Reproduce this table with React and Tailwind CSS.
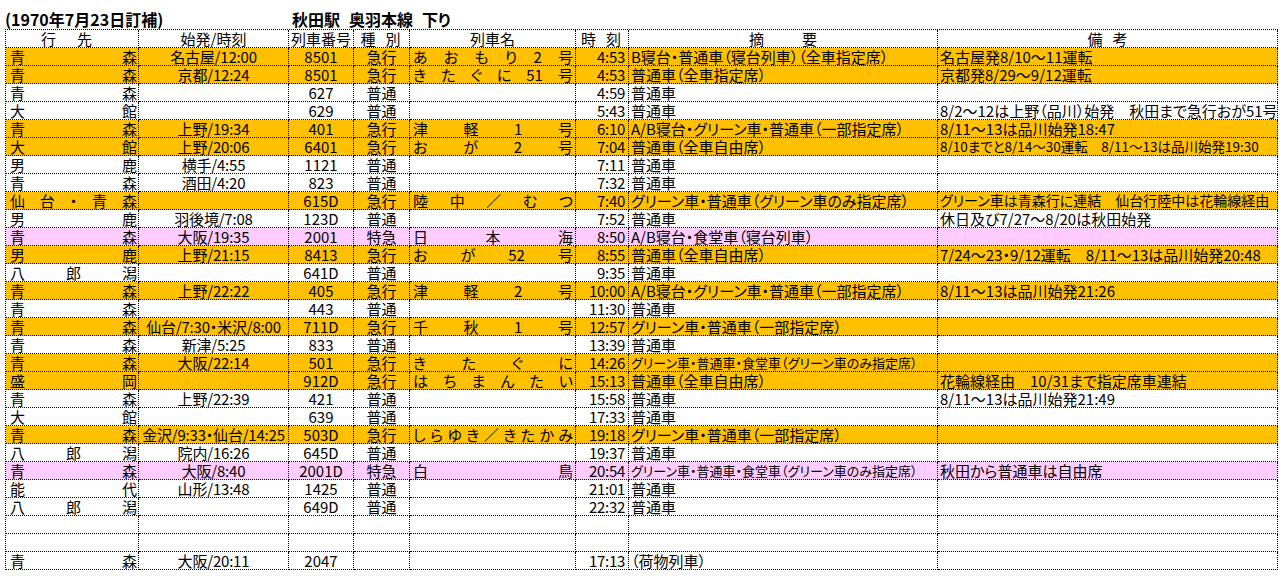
import React from "react";

const GRID = "grid grid-cols-[133px_150px_65px_56px_166px_53px_309px_340px]";
const CELL =
  "h-[18px] border-r border-b border-dotted border-black whitespace-nowrap leading-[17px]";

const O = "bg-[#ffc000]";
const P = "bg-[#ffccff]";
const W = "bg-white";

const rows = [
  [O, ["青", "森"], "名古屋/12:00", "8501", "急行", ["あ", "お", "も", "り", "2", "号"], "4:53", "B寝台・普通車（寝台列車）（全車指定席）", "名古屋発8/10〜11運転"],
  [O, ["青", "森"], "京都/12:24", "8501", "急行", ["き", "た", "ぐ", "に", "51", "号"], "4:53", "普通車（全車指定席）", "京都発8/29〜9/12運転"],
  [W, ["青", "森"], "", "627", "普通", null, "4:59", "普通車", ""],
  [W, ["大", "館"], "", "629", "普通", null, "5:43", "普通車", "8/2〜12は上野（品川）始発　秋田まで急行おが51号"],
  [O, ["青", "森"], "上野/19:34", "401", "急行", ["津", "軽", "1", "号"], "6:10", "A/B寝台・グリーン車・普通車（一部指定席）", "8/11〜13は品川始発18:47"],
  [O, ["大", "館"], "上野/20:06", "6401", "急行", ["お", "が", "2", "号"], "7:04", "普通車（全車自由席）", "8/10までと8/14〜30運転　8/11〜13は品川始発19:30", { n: "text-[13.5px]" }],
  [W, ["男", "鹿"], "横手/4:55", "1121", "普通", null, "7:11", "普通車", ""],
  [W, ["青", "森"], "酒田/4:20", "823", "普通", null, "7:32", "普通車", ""],
  [O, ["仙", "台", "・", "青", "森"], "", "615D", "急行", ["陸", "中", "／", "む", "つ"], "7:40", "グリーン車・普通車（グリーン車のみ指定席）", "グリーン車は青森行に連結　仙台行陸中は花輪線経由", { n: "text-[14px]" }],
  [W, ["男", "鹿"], "羽後境/7:08", "123D", "普通", null, "7:52", "普通車", "休日及び7/27〜8/20は秋田始発"],
  [P, ["青", "森"], "大阪/19:35", "2001", "特急", ["日", "本", "海"], "8:50", "A/B寝台・食堂車（寝台列車）", ""],
  [O, ["男", "鹿"], "上野/21:15", "8413", "急行", ["お", "が", "52", "号"], "8:55", "普通車（全車自由席）", "7/24〜23・9/12運転　8/11〜13は品川始発20:48"],
  [W, ["八", "郎", "潟"], "", "641D", "普通", null, "9:35", "普通車", ""],
  [O, ["青", "森"], "上野/22:22", "405", "急行", ["津", "軽", "2", "号"], "10:00", "A/B寝台・グリーン車・普通車（一部指定席）", "8/11〜13は品川始発21:26"],
  [W, ["青", "森"], "", "443", "普通", null, "11:30", "普通車", ""],
  [O, ["青", "森"], "仙台/7:30・米沢/8:00", "711D", "急行", ["千", "秋", "1", "号"], "12:57", "グリーン車・普通車（一部指定席）", ""],
  [W, ["青", "森"], "新津/5:25", "833", "普通", null, "13:39", "普通車", ""],
  [O, ["青", "森"], "大阪/22:14", "501", "急行", ["き", "た", "ぐ", "に"], "14:26", "グリーン車・普通車・食堂車（グリーン車のみ指定席）", "", { d: "text-[13px]" }],
  [O, ["盛", "岡"], "", "912D", "急行", ["は", "ち", "ま", "ん", "た", "い"], "15:13", "普通車（全車自由席）", "花輪線経由　10/31まで指定席車連結"],
  [W, ["青", "森"], "上野/22:39", "421", "普通", null, "15:58", "普通車", "8/11〜13は品川始発21:49"],
  [W, ["大", "館"], "", "639", "普通", null, "17:33", "普通車", ""],
  [O, ["青", "森"], "金沢/9:33・仙台/14:25", "503D", "急行", ["し", "ら", "ゆ", "き", "／", "き", "た", "か", "み"], "19:18", "グリーン車・普通車（一部指定席）", ""],
  [W, ["八", "郎", "潟"], "院内/16:26", "645D", "普通", null, "19:37", "普通車", ""],
  [P, ["青", "森"], "大阪/8:40", "2001D", "特急", ["白", "鳥"], "20:54", "グリーン車・普通車・食堂車（グリーン車のみ指定席）", "秋田から普通車は自由席", { d: "text-[13px]" }],
  [W, ["能", "代"], "山形/13:48", "1425", "普通", null, "21:01", "普通車", ""],
  [W, ["八", "郎", "潟"], "", "649D", "普通", null, "22:32", "普通車", ""],
  [W, null, "", "", "", null, "", "", ""],
  [W, null, "", "", "", null, "", "", ""],
  [W, ["青", "森"], "大阪/20:11", "2047", "", null, "17:13", "（荷物列車）", ""],
];

function Dist({ tokens, cls }) {
  if (!tokens) return null;
  return (
    <div className={`flex justify-between ${cls}`}>
      {tokens.map((t, i) => (
        <span key={i}>{t}</span>
      ))}
    </div>
  );
}

export default function App() {
  return (
    <div className="w-[1285px] h-[576px] bg-white text-black font-['Noto_Sans_CJK_JP','Noto_Sans_CJK_SC',sans-serif] text-[15px] [font-feature-settings:'palt'] overflow-hidden">
      <div className="flex h-[29px] items-end pl-[5px] pb-[1px] font-bold text-[16px] leading-[18px]">
        <span className="w-[287px]">(1970年7月23日訂補)</span>
        <span className="flex gap-[9px]">
          <span>秋田駅</span>
          <span>奥羽本線</span>
          <span>下り</span>
        </span>
      </div>
      <div className="ml-[5px] w-[1273px] border-l border-t border-dotted border-black">
        <div className={`${GRID} bg-white`}>
          <div className={`${CELL} flex pl-[35px] gap-[21px]`}>
            <span>行</span>
            <span>先</span>
          </div>
          <div className={`${CELL} text-center`}>始発/時刻</div>
          <div className={`${CELL} text-center`}>列車番号</div>
          <div className={`${CELL} flex justify-center gap-[10px] pr-[2px]`}>
            <span>種</span>
            <span>別</span>
          </div>
          <div className={`${CELL} text-center`}>列車名</div>
          <div className={`${CELL} flex pl-[5px] gap-[10px]`}>
            <span>時</span>
            <span>刻</span>
          </div>
          <div className={`${CELL} flex justify-center gap-[38px]`}>
            <span>摘</span>
            <span>要</span>
          </div>
          <div className={`${CELL} flex justify-center gap-[10px]`}>
            <span>備</span>
            <span>考</span>
          </div>
        </div>
        {rows.map((r, i) => {
          const [bg, dest, orig, num, kind, name, time, desc, note, opt] = r;
          const dCls = (opt && opt.d) || "";
          const nCls = (opt && opt.n) || "";
          return (
            <div key={i} className={`${GRID} ${bg}`}>
              <div className={CELL}>
                <Dist tokens={dest} cls="pl-[4px] pr-[1px]" />
              </div>
              <div className={`${CELL} text-center tracking-[-0.2px]`}>{orig}</div>
              <div className={`${CELL} text-center`}>{num}</div>
              <div className={`${CELL} text-center`}>{kind}</div>
              <div className={CELL}>
                <Dist tokens={name} cls="pl-[3px] pr-[2px]" />
              </div>
              <div className={`${CELL} text-right pr-[3px] tracking-[-0.3px]`}>{time}</div>
              <div className={`${CELL} pl-[2px] ${dCls}`}>{desc}</div>
              <div className={`${CELL} pl-[2px] ${nCls}`}>{note}</div>
            </div>
          );
        })}
      </div>
    </div>
  );
}
